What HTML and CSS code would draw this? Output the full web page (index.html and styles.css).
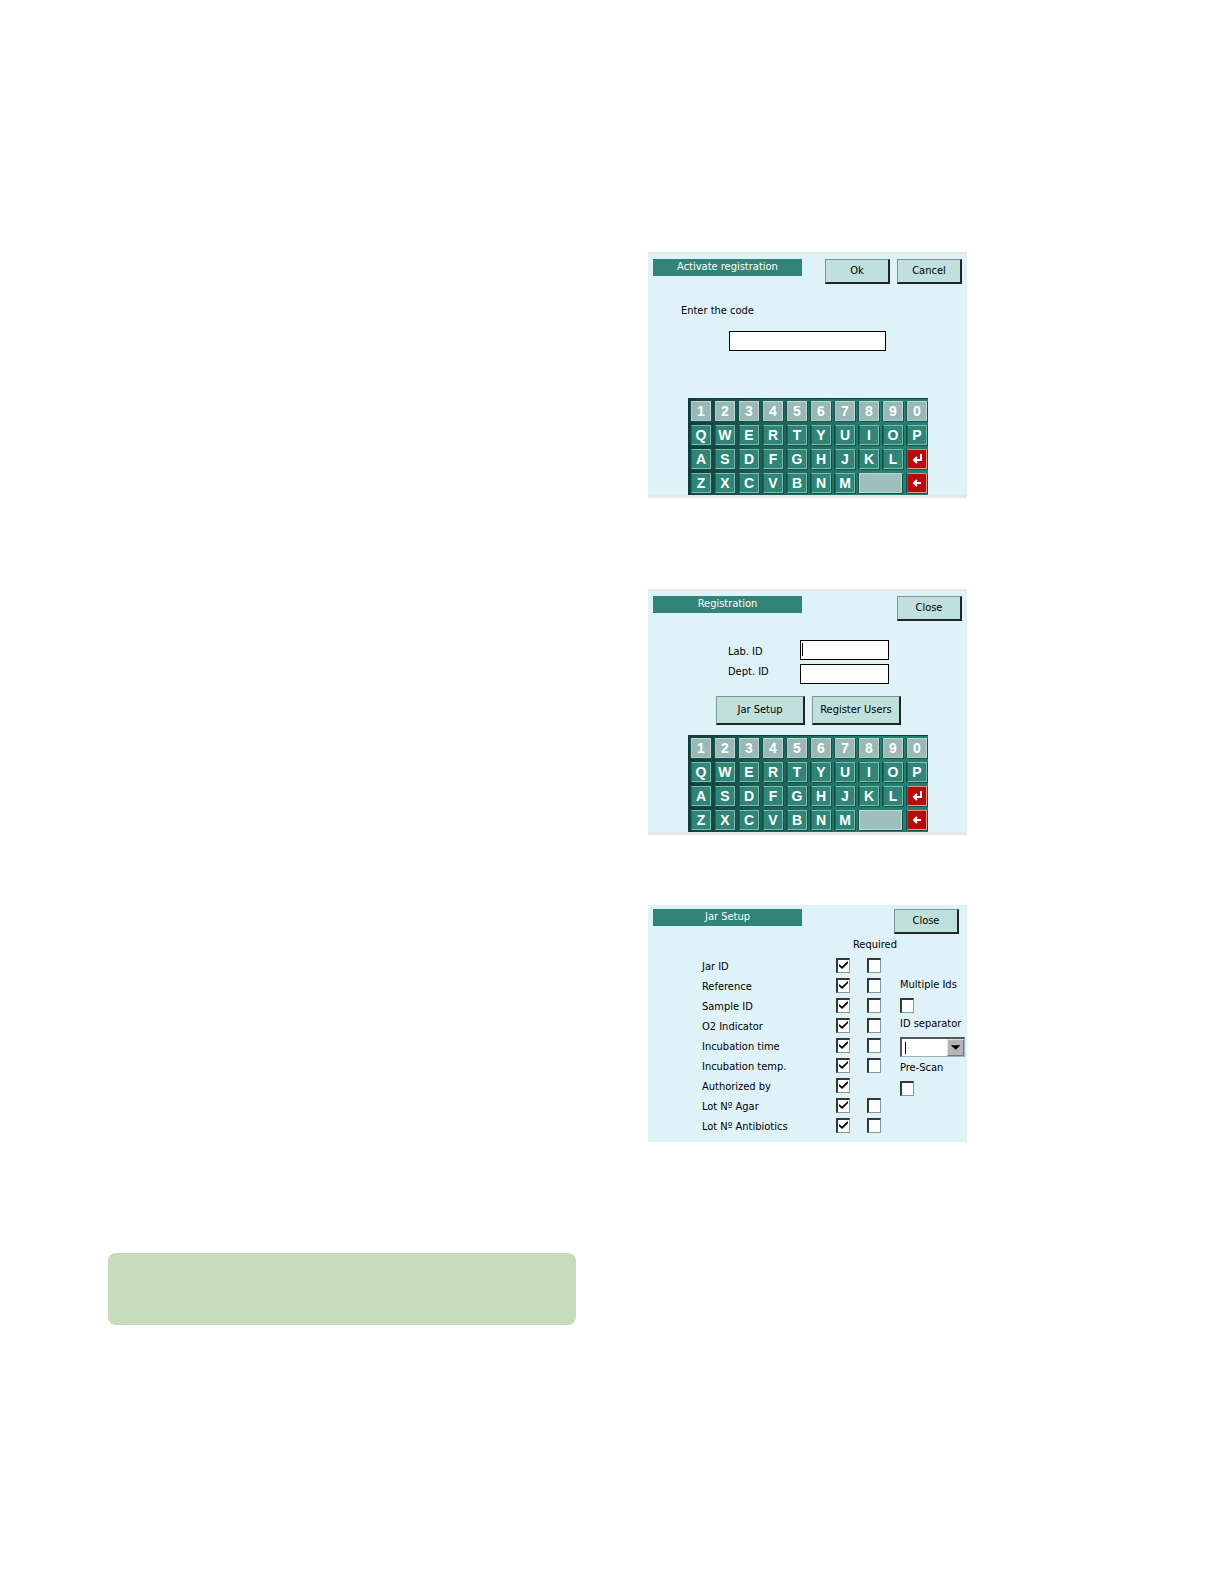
FILE: index.html
```
<!DOCTYPE html>
<html lang="en">
<head>
    <meta charset="UTF-8">
    <meta name="viewport" content="width=device-width, initial-scale=1.0">
    <title>Registration</title>
    <link rel="stylesheet" href="styles.css">
</head>
<body>
    <main class="page">
        <div class="screens">
            <section class="screen">
                <header class="bar">
                    <h2 class="title">Activate registration</h2>
                    <div class="actions">
                        <button type="button" class="btn">Ok</button>
                        <button type="button" class="btn">Cancel</button>
                    </div>
                </header>
                <form class="code-form">
                    <label for="code">Enter the code</label>
                    <input type="text" id="code" class="field code-field">
                </form>
                <div class="keyboard"></div>
            </section>

            <section class="screen screen-registration">
                <header class="bar">
                    <h2 class="title">Registration</h2>
                    <button type="button" class="btn">Close</button>
                </header>
                <form class="id-form">
                    <label for="lab-id" class="lab-label">Lab. ID</label>
                    <div class="field-wrap">
                        <input type="text" id="lab-id" class="field">
                        <span class="caret"></span>
                    </div>
                    <label for="dept-id">Dept. ID</label>
                    <input type="text" id="dept-id" class="field">
                </form>
                <div class="links">
                    <button type="button" class="btn btn-large">Jar Setup</button>
                    <button type="button" class="btn btn-large">Register Users</button>
                </div>
                <div class="keyboard"></div>
            </section>

            <section class="screen screen-jar">
                <header class="bar">
                    <h2 class="title">Jar Setup</h2>
                    <button type="button" class="btn">Close</button>
                </header>
                <form class="jar-form">
                    <table class="jar-table">
                        <thead>
                            <tr><th></th><th></th><th><span class="required">Required</span></th></tr>
                        </thead>
                        <tbody id="jar-rows"></tbody>
                    </table>
                    <div class="options">
                        <label for="multiple-ids">Multiple Ids</label>
                        <input type="checkbox" id="multiple-ids" class="check">
                        <label for="separator">ID separator</label>
                        <div class="field-wrap">
                            <select id="separator" class="select"><option></option></select>
                            <span class="caret"></span>
                            <svg class="arrow" viewBox="0 0 17 17"><path d="M3 6h11l-5 5z"/></svg>
                        </div>
                        <label for="pre-scan">Pre-Scan</label>
                        <input type="checkbox" id="pre-scan" class="check">
                    </div>
                </form>
            </section>
        </div>
        <aside class="note"></aside>
    </main>

    <script src="script.js"></script>
</body>
</html>
```
FILE: styles.css
```
* {
    box-sizing: border-box;
}
body {
    margin: 0;
    background: white;
    color: black;
    font-family: "DejaVu Sans Condensed", "Noto Sans", sans-serif;
    font-size: 11px;
    line-height: 16px;
}
.page {
    display: grid;
    grid-template-columns: 468fr 319fr;
    column-gap: 72px;
    row-gap: 111px;
    padding: 252px 21% 80px 108px;
}
.screens {
    grid-column: 2;
}
.note {
    height: 72px;
    border-radius: 8px;
    background-color: #c7dcbb;
}
.screen {
    padding: 5px 5px 0;
    border-top: 2px solid #e2e8ea;
    border-bottom: 3px solid #e4e8e9;
    background-color: #dff2f7;
}
.bar {
    display: flex;
    justify-content: space-between;
    align-items: flex-start;
}
.title {
    width: 149px;
    height: 17px;
    margin: 0;
    background-color: #318477;
    color: white;
    font-size: 11px;
    font-weight: normal;
    line-height: 15px;
    text-align: center;
}
.actions {
    display: flex;
    gap: 7px;
}
.btn {
    width: 65px;
    height: 25px;
    padding: 0;
    border: 1px solid #7f9794;
    border-right: 2px solid #1b2625;
    border-bottom: 2px solid #1b2625;
    background-color: #bfe0dc;
    color: black;
    font: inherit;
}
.field {
    display: block;
    width: 100%;
    height: 20px;
    padding: 0 4px;
    border: 1px solid black;
    background-color: white;
    font: inherit;
}
.field-wrap {
    position: relative;
}
.caret {
    position: absolute;
    top: 3px;
    left: 2px;
    width: 1px;
    height: 13px;
    background-color: black;
}

/* activate registration */
.code-form {
    display: flex;
    flex-direction: column;
    gap: 12px;
    padding: 19px 0 47px 28px;
}
.code-field {
    width: 157px;
    margin-left: 48px;
}

/* registration */
.screen-registration {
    margin-top: 91px;
}
.id-form {
    display: grid;
    grid-template-columns: 72px 89px;
    row-gap: 4px;
    padding: 19px 0 12px 75px;
}
.lab-label {
    align-self: end;
}
.links {
    display: flex;
    gap: 7px;
    margin-bottom: 10px;
    padding-left: 63px;
}
.btn-large {
    width: 89px;
    height: 29px;
}

/* keyboard */
.keyboard {
    display: grid;
    grid-template-columns: repeat(10, 20px);
    grid-auto-rows: 20px;
    gap: 4px;
    width: 240px;
    margin-left: 35px;
    padding: 2px 1px 2px 3px;
    border-top: 1px solid #12403c;
    background: linear-gradient(to right, #123a3c, #1c5f57 30%, #228070 80%);
}
.key {
    padding: 0;
    border: 1px solid #7fb9b0;
    border-left-color: #1f5f58;
    background-color: #2f8576;
    box-shadow: -1px 0 0 #15504a, 1px 1px 0 #15504a;
    color: white;
    font: bold 14px/18px "Liberation Sans", Arial, sans-serif;
}
.key-number {
    border-color: #c5d5d4 #c5d5d4 #b0c8c6 #b0c8c6;
    background-color: #98b9b6;
}
.key-space {
    grid-column: span 2;
    width: 43px;
    border-color: #c5d5d4;
    background-color: #9dbfbe;
}
.key-red {
    border-color: #e58a80 #e0a098 #e0a098 #c03028;
    background-color: #bb0a0a;
}
.key svg {
    display: block;
    width: 18px;
    height: 18px;
    fill: none;
    stroke: white;
    stroke-width: 2;
}

/* jar setup */
.screen-jar {
    margin-top: 70px;
    padding: 4px 2px 4px 5px;
    border-top-width: 0;
    border-bottom-width: 0;
}
.screen-jar .bar {
    padding-right: 6px;
}
.jar-form {
    display: flex;
    justify-content: space-between;
}
.jar-table {
    margin-left: 49px;
    border-collapse: collapse;
}
.jar-table th,
.jar-table td {
    height: 20px;
    padding: 0;
    font-weight: normal;
    vertical-align: top;
}
.jar-table th:nth-child(1) {
    width: 134px;
}
.jar-table th:nth-child(2) {
    width: 31px;
}
.jar-table th:nth-child(3) {
    width: 30px;
}
.jar-table thead th {
    height: 24px;
    padding-top: 3px;
}
.required {
    display: flex;
    justify-content: flex-end;
    width: 30px;
}
.jar-table label {
    display: block;
    padding-top: 1px;
}
.check {
    appearance: none;
    display: block;
    width: 14px;
    height: 15px;
    margin: 0;
    border: 1px solid #8b9698;
    border-top: 2px solid #30383a;
    border-left: 2px solid #30383a;
    background-color: white;
}
.check:checked::before {
    content: "";
    display: block;
    width: 9px;
    height: 8px;
    margin: 1px;
    background-color: black;
    clip-path: polygon(0 38%, 35% 70%, 100% 0, 100% 28%, 35% 100%, 0 66%);
}
.options {
    width: 65px;
    padding-top: 43px;
}
.options label {
    display: block;
    margin-bottom: 5px;
    white-space: nowrap;
}
.options .check,
.options .field-wrap {
    margin-bottom: 3px;
}
.options .caret {
    left: 5px;
    top: 5px;
    height: 12px;
}
.select {
    appearance: none;
    display: block;
    width: 100%;
    height: 20px;
    border: 1px solid #a5b0b2;
    border-top: 2px solid #50585a;
    border-left: 2px solid #50585a;
    border-radius: 0;
    background-color: white;
}
.arrow {
    position: absolute;
    top: 2px;
    right: 1px;
    width: 17px;
    height: 17px;
    border: 1px solid #75757a;
    border-top-color: #e0e0e2;
    border-left-color: #e0e0e2;
    background-color: #b5b5b8;
    pointer-events: none;
}
```
FILE: script.js
```
const jarFields = ['Jar ID', 'Reference', 'Sample ID', 'O2 Indicator', 'Incubation time',
    'Incubation temp.', 'Authorized by', 'Lot Nº Agar', 'Lot Nº Antibiotics'];

const jarRows = document.getElementById('jar-rows');
jarFields.forEach((name, i) => {
    const required = name === 'Authorized by' ? '' :
        `<input type="checkbox" class="check" aria-label="${name} required">`;
    jarRows.innerHTML += `
        <tr>
            <td><label for="jar-${i}">${name}</label></td>
            <td><input type="checkbox" id="jar-${i}" class="check" checked></td>
            <td>${required}</td>
        </tr>
    `;
});

const enterIcon = '<svg viewBox="0 0 18 18"><path d="M13 4v6H6M9 7l-3 3 3 3"/></svg>';
const backIcon = '<svg viewBox="0 0 18 18"><path d="M13 9H6M9 6L6 9l3 3"/></svg>';

function key(label, className = '', name = label) {
    return `<button type="button" class="key ${className}" aria-label="${name}">${label}</button>`;
}

document.querySelectorAll('.keyboard').forEach(keyboard => {
    keyboard.innerHTML =
        [...'1234567890'].map(c => key(c, 'key-number')).join('') +
        [...'QWERTYUIOPASDFGHJKL'].map(c => key(c)).join('') +
        key(enterIcon, 'key-red', 'Enter') +
        [...'ZXCVBNM'].map(c => key(c)).join('') +
        key('', 'key-space', 'Space') +
        key(backIcon, 'key-red', 'Backspace');
});
```
